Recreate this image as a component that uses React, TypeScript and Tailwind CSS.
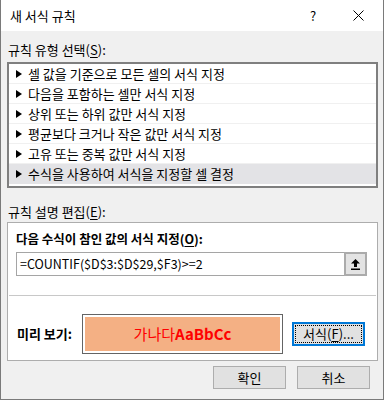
import { Fragment } from 'react';

const rules = [
  '셀 값을 기준으로 모든 셀의 서식 지정',
  '다음을 포함하는 셀만 서식 지정',
  '상위 또는 하위 값만 서식 지정',
  '평균보다 크거나 작은 값만 서식 지정',
  '고유 또는 중복 값만 서식 지정',
  '수식을 사용하여 서식을 지정할 셀 결정',
];

function Arrow() {
  return (
    <svg width="6" height="8" viewBox="0 0 6 8" className="shrink-0">
      <polygon points="0,0 6,4 0,8" fill="#000" />
    </svg>
  );
}

function Mnemonic({ before, k, after }: { before: string; k: string; after: string }) {
  return (
    <Fragment>
      {before}(<span className="underline underline-offset-2">{k}</span>){after}
    </Fragment>
  );
}

export default function App() {
  return (
    <div className="w-[384px] h-[400px] border-x border-b border-[#7a7a7a] bg-[#f0f0f0] flex flex-col text-[13px] leading-4 text-black font-[Noto_Sans_CJK_KR,sans-serif]">
      {/* Title bar */}
      <div className="h-[31px] bg-white flex items-center pl-[9px] shrink-0">
        <span>새 서식 규칙</span>
        <span className="ml-auto text-[13px] w-[12px] text-center">?</span>
        <div className="w-[47px] flex justify-center mr-[1px] ml-[16px]">
          <svg width="11" height="11" viewBox="0 0 11 11">
            <path d="M0.5 0.5 L10.5 10.5 M10.5 0.5 L0.5 10.5" stroke="#000" strokeWidth="1" />
          </svg>
        </div>
      </div>

      <div className="flex flex-col pl-[6px] pr-[5px]">
        {/* Rule type */}
        <div className="mt-[11px] ml-[1px]">
          <Mnemonic before="규칙 유형 선택" k="S" after=":" />
        </div>
        <div className="mt-[4px] border-2 border-[#7f7f7f] bg-white pb-[2px]">
          {rules.map((r, i) => (
            <div
              key={i}
              className={`h-[20px] flex items-center gap-[6px] pl-[7px] border-b border-[#f0f0f0] ${
                i === rules.length - 1 ? 'bg-[#e3e3e6] border-b-0' : ''
              }`}
            >
              <Arrow />
              <span>{r}</span>
            </div>
          ))}
        </div>

        {/* Rule description */}
        <div className="mt-[16px] ml-[1px]">
          <Mnemonic before="규칙 설명 편집" k="E" after=":" />
        </div>
        <div className="mt-[2px] border border-[#adadad] bg-white flex flex-col">
          <div className="h-[72px] pt-[8px] pl-[8px] pr-[10px]">
            <div className="font-bold text-[12.5px]">
              <Mnemonic before="다음 수식이 참인 값의 서식 지정" k="O" after=":" />
            </div>
            <div className="mt-[5px] h-[24px] border border-[#a5a5a5] flex items-center">
              <span className="pl-[3px] flex-1 text-[12.5px]">=COUNTIF($D$3:$D$29,$F3)&gt;=2</span>
              <div className="w-[23px] h-[24px] -my-px -mr-px border-2 border-[#ababab] bg-[#e3e3e3] flex items-center justify-center">
                <svg width="9" height="11" viewBox="0 0 9 11">
                  <polygon points="4.5,0 9,4.5 6,4.5 6,8 3,8 3,4.5 0,4.5" fill="#000" />
                  <rect x="0" y="9.5" width="9" height="1.5" fill="#000" />
                </svg>
              </div>
            </div>
          </div>
          <div className="h-px mx-px bg-[#c8c8c8]" />
          <div className="h-[64px] flex items-center pl-[9px] pt-[12px]">
            <span className="w-[65px] font-bold">미리 보기:</span>
            <div className="w-[201px] h-[40px] border border-[#646464] bg-white p-[2px]">
              <div className="h-full bg-[#f4b084] flex items-center justify-center text-[15px] text-[#ff0000]">
                <span>가나다</span>
                <span className="font-bold">AaBbCc</span>
              </div>
            </div>
            <div className="ml-[9px] w-[73px] h-[24px] border-2 border-[#0078d7] bg-[#e1e1e1] p-px">
              <div className="h-full border border-dotted border-black flex items-center justify-center">
                <Mnemonic before="서식" k="F" after="..." />
              </div>
            </div>
          </div>
        </div>

        {/* Buttons */}
        <div className="mt-[5px] flex justify-end gap-[11px] pr-[8px]">
          <div className="w-[73px] h-[23px] border border-[#adadad] bg-[#e1e1e1] flex items-center justify-center">
            확인
          </div>
          <div className="w-[73px] h-[23px] border border-[#adadad] bg-[#e1e1e1] flex items-center justify-center">
            취소
          </div>
        </div>
      </div>
    </div>
  );
}
